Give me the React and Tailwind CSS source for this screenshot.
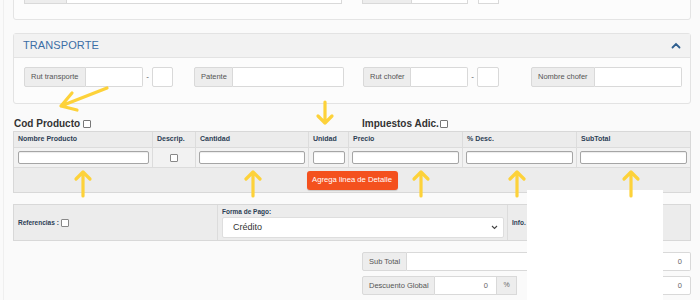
import React from "react";

const F = "font-['Liberation_Sans','Helvetica',sans-serif]";

function Group({ labelW, inputW, label, value, right }) {
  return (
    <div className="flex h-full">
      <div
        className={`${labelW} flex items-center pl-[6px] bg-[#ededed] border border-[#d9d9d9] rounded-l-[2px] text-[7.5px] text-[#555] whitespace-nowrap`}
      >
        {label}
      </div>
      <div
        className={`${inputW} flex items-center justify-end pr-[8px] bg-white border border-l-0 border-[#d9d9d9] ${right ? "" : "rounded-r-[2px]"} text-[7.5px] text-[#666]`}
      >
        {value}
      </div>
      {right}
    </div>
  );
}

function Box({ w }) {
  return <div className={`${w} h-full bg-white border border-[#d9d9d9] rounded-[2px]`} />;
}

function Check({ cls = "" }) {
  return <span className={`inline-block w-[8px] h-[8px] border border-[#777] rounded-[1px] bg-white ${cls}`} />;
}

function TInput({ w }) {
  return (
    <div
      className={`${w} h-[13px] bg-white border border-[#a5a5a5] rounded-[2px] shadow-[inset_0_1px_1px_rgba(0,0,0,0.08)]`}
    />
  );
}

export default function App() {
  return (
    <div className={`relative w-[700px] h-[300px] overflow-hidden bg-[#fafafa] ${F}`}>
      <div className="absolute left-[3px] top-0 bottom-0 w-px bg-[#efefef]" />

      {/* top panel (cut) */}
      <div className="ml-[13px] w-[678px] mt-[-20px] h-[40px] border border-[#e4e4e4] bg-[#fcfcfc] rounded-b-[3px]">
        <div className="flex h-[23px]">
          <div className="ml-[10px] w-[43px] h-full bg-[#ededed] border border-[#d9d9d9]" />
          <div className="w-[275px] h-full bg-white border border-l-0 border-[#d9d9d9]" />
          <div className="ml-[20px] w-[50px] h-full bg-[#ededed] border border-[#d9d9d9]" />
          <div className="w-[56px] h-full bg-white border border-l-0 border-[#d9d9d9]" />
          <div className="ml-[10px] w-[21px] h-full bg-white border border-[#d9d9d9]" />
        </div>
      </div>

      {/* TRANSPORTE panel */}
      <div className="ml-[13px] w-[678px] mt-[13px] h-[71px] border border-[#e3e3e3] bg-[#fcfcfc] rounded-[3px]">
        <div className="h-[24px] bg-[#f2f2f2] border-b border-[#e3e3e3] flex items-center justify-between pl-[9px] pr-[9px]">
          <span className="text-[11px] text-[#3b6ea6] tracking-[0.1px]">TRANSPORTE</span>
          <svg width="10" height="7" viewBox="0 0 10 7">
            <path d="M1.5 5.5 L5 2 L8.5 5.5" fill="none" stroke="#2f5f8f" strokeWidth="1.8" strokeLinecap="round" />
          </svg>
        </div>
        <div className="flex h-[20px] mt-[9px] pl-[10px]">
          <Group labelW="w-[62px]" inputW="w-[57px]" label="Rut transporte" />
          <span className="w-[9px] text-center text-[8px] text-[#555] leading-[20px]">-</span>
          <Box w="w-[21px]" />
          <div className="w-[21px]" />
          <Group labelW="w-[39px]" inputW="w-[111px]" label="Patente" />
          <div className="w-[19px]" />
          <Group labelW="w-[48px]" inputW="w-[57px]" label="Rut chofer" />
          <span className="w-[9px] text-center text-[8px] text-[#555] leading-[20px]">-</span>
          <Box w="w-[22px]" />
          <div className="w-[32px]" />
          <Group labelW="w-[64px]" inputW="w-[87px]" label="Nombre chofer" />
        </div>
      </div>

      {/* labels row */}
      <div className="flex items-center h-[15px] mt-[12px] text-[10px] font-bold text-[#333]">
        <div className="ml-[14px] w-[348px] flex items-center">
          <span>Cod Producto</span>
          <Check cls="ml-[3px]" />
        </div>
        <div className="flex items-center">
          <span>Impuestos Adic.</span>
          <Check cls="ml-[1px]" />
        </div>
      </div>

      {/* detail table */}
      <div className="ml-[13px] w-[678px] border border-[#d8d8d8] bg-[#ececec]">
        <div className="flex h-[16px] border-b border-[#dcdcdc] text-[7px] font-bold text-[#2c3e55]">
          <div className="w-[139px] pl-[4px] flex items-center border-r border-[#dcdcdc]">Nombre Producto</div>
          <div className="w-[43px] pl-[4px] flex items-center border-r border-[#dcdcdc]">Descrip.</div>
          <div className="w-[113px] pl-[4px] flex items-center border-r border-[#dcdcdc]">Cantidad</div>
          <div className="w-[40px] pl-[4px] flex items-center border-r border-[#dcdcdc]">Unidad</div>
          <div className="w-[114px] pl-[4px] flex items-center border-r border-[#dcdcdc]">Precio</div>
          <div className="w-[114px] pl-[4px] flex items-center border-r border-[#dcdcdc]">% Desc.</div>
          <div className="flex-1 pl-[4px] flex items-center">SubTotal</div>
        </div>
        <div className="flex h-[20px] bg-[#f2f2f2] border-b border-[#dcdcdc]">
          <div className="w-[139px] flex items-center justify-center border-r border-[#dcdcdc]"><TInput w="w-[131px]" /></div>
          <div className="w-[43px] flex items-center justify-center border-r border-[#dcdcdc]"><Check cls="border-[#888]" /></div>
          <div className="w-[113px] flex items-center justify-center border-r border-[#dcdcdc]"><TInput w="w-[106px]" /></div>
          <div className="w-[40px] flex items-center justify-center border-r border-[#dcdcdc]"><TInput w="w-[32px]" /></div>
          <div className="w-[114px] flex items-center justify-center border-r border-[#dcdcdc]"><TInput w="w-[107px]" /></div>
          <div className="w-[114px] flex items-center justify-center border-r border-[#dcdcdc]"><TInput w="w-[107px]" /></div>
          <div className="flex-1 flex items-center justify-center"><TInput w="w-[107px]" /></div>
        </div>
        <div className="h-[24px] flex items-center justify-center">
          <div className="w-[91px] h-[19px] rounded-[3px] bg-[#f4511e] text-white text-[7.7px] flex items-center justify-center shadow-[0_1px_1px_rgba(0,0,0,0.15)]">
            Agrega linea de Detalle
          </div>
        </div>
      </div>

      {/* bottom table */}
      <div className="ml-[13px] mt-[11px] w-[678px] h-[37px] border border-[#d8d8d8] bg-[#ececec] flex">
        <div className="w-[204px] flex items-center pl-[4px] border-r border-[#dcdcdc] text-[6.5px] font-bold text-[#2c3e55]">
          <span>Referencias :</span>
          <Check cls="ml-[2px] border-[#888]" />
        </div>
        <div className="w-[290px] border-r border-[#dcdcdc] pl-[4px] pt-[3px]">
          <div className="text-[6.5px] font-bold text-[#2c3e55] leading-[8px]">Forma de Pago:</div>
          <div className="mt-[1px] w-[282px] h-[21px] bg-white border border-[#dedede] rounded-[2px] flex items-center justify-between pl-[10px] pr-[5px]">
            <span className="text-[9px] text-[#333]">Crédito</span>
            <svg width="7" height="5" viewBox="0 0 7 5">
              <path d="M1 1 L3.5 3.5 L6 1" fill="none" stroke="#444" strokeWidth="1.1" />
            </svg>
          </div>
        </div>
        <div className="flex-1 flex items-center pl-[4px] text-[6.5px] font-bold text-[#2c3e55]">Info.</div>
      </div>

      {/* totals */}
      <div className="ml-[362px] mt-[11px] h-[19px]">
        <Group labelW="w-[45px]" inputW="w-[284px]" label="Sub Total" value="0" />
      </div>
      <div className="ml-[362px] mt-[5px] h-[19px] flex">
        <Group
          labelW="w-[73px]"
          inputW="w-[62px]"
          label="Descuento Global"
          value="0"
          right={
            <div className="w-[20px] h-full bg-[#ededed] border border-l-0 border-[#d9d9d9] flex items-center justify-center text-[7px] text-[#666]">
              %
            </div>
          }
        />
        <div className="ml-[10px] w-[164px] h-full bg-white border border-[#d9d9d9] rounded-[2px] flex items-center justify-end pr-[8px] text-[7.5px] text-[#666]">
          0
        </div>
      </div>

      {/* white redaction box */}
      <div className="absolute left-[527px] top-[190px] w-[136px] h-[110px] bg-white" />

      {/* yellow arrows */}
      <svg className="absolute left-0 top-0 pointer-events-none" width="700" height="300" viewBox="0 0 700 300">
        <g fill="none" stroke="#fdd23a" strokeWidth="3.2" strokeLinecap="round" strokeLinejoin="round">
          <path d="M107 88 L61 106 M61 106 L72 93 M61 106 L77 110" />
          <path d="M325 102 L325 123 M318 116 L325 123 L332 116" />
          <path d="M83 196 L83 172 M76 179 L83 172 L90 179" />
          <path d="M253 196 L253 172 M246 179 L253 172 L260 179" />
          <path d="M421 196 L421 172 M414 179 L421 172 L428 179" />
          <path d="M517 196 L517 172 M510 179 L517 172 L524 179" />
          <path d="M631 196 L631 172 M624 179 L631 172 L638 179" />
        </g>
      </svg>
    </div>
  );
}
